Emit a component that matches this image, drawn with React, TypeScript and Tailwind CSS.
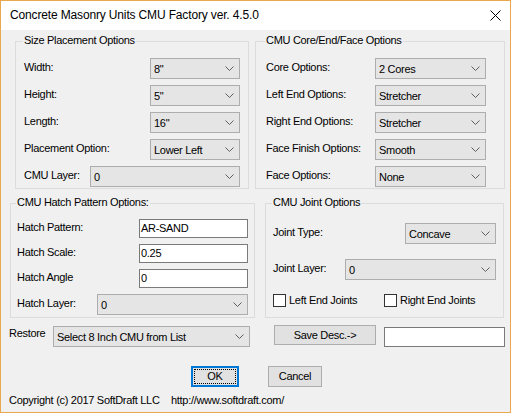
import React from 'react'

function Chevron() {
  return (
    <svg width="9" height="5" viewBox="0 0 9 5" className="shrink-0">
      <path d="M0.5 0.5 L4.5 4.5 L8.5 0.5" fill="none" stroke="#5f5f5f" strokeWidth="1" />
    </svg>
  )
}

function Combo({ value, className }: { value: string; className: string }) {
  return (
    <div
      className={`${className} h-[21px] flex items-center justify-between bg-[#e5e5e5] border border-[#adadad] pl-[3px] pr-[5px]`}
    >
      <span className="pt-[1px]">{value}</span>
      <Chevron />
    </div>
  )
}

function TextBox({ value, className }: { value: string; className: string }) {
  return (
    <div className={`${className} flex items-center bg-white border border-[#7a7a7a] pl-[1px]`}>
      {value}
    </div>
  )
}

function Group({
  title,
  titleLeft,
  className,
  children,
}: {
  title: string
  titleLeft: string
  className: string
  children: React.ReactNode
}) {
  return (
    <div className={`relative border border-[#dcdcdc] ${className}`}>
      <span className={`absolute -top-[8px] ${titleLeft} px-[1px] bg-[#f0f0f0] leading-[13px]`}>
        {title}
      </span>
      {children}
    </div>
  )
}

function Row({ label, children }: { label: string; children: React.ReactNode }) {
  return (
    <div className="flex items-center justify-between">
      <span className="pb-[3px]">{label}</span>
      {children}
    </div>
  )
}

function CheckBox({ label, className }: { label: string; className?: string }) {
  return (
    <div className={`flex items-center ${className ?? ''}`}>
      <div className="w-[13px] h-[13px] bg-white border border-[#333333]" />
      <span className="ml-[3px]">{label}</span>
    </div>
  )
}

export default function App() {
  return (
    <div className="w-[511px] h-[413px] flex flex-col border border-[#e9a84e] bg-[#f0f0f0] text-black text-[11px] leading-[13px] tracking-[-0.3px] font-['Liberation_Sans',Arial,sans-serif] select-none">
      {/* Title bar */}
      <div className="h-[29px] shrink-0 bg-white flex items-center justify-between pl-[9px] pr-[9px] text-[12px] tracking-[-0.15px]">
        <span>Concrete Masonry Units CMU Factory ver. 4.5.0</span>
        <svg width="11" height="11" viewBox="0 0 11 11">
          <path d="M0.5 0.5 L10.5 10.5 M10.5 0.5 L0.5 10.5" stroke="#000" strokeWidth="1" />
        </svg>
      </div>

      {/* Top groups */}
      <div className="flex mt-[11px] pl-[14px]">
        <Group
          title="Size Placement Options"
          titleLeft="left-[7px]"
          className="w-[234px] h-[148px] pt-[16px] px-[8px] flex flex-col gap-[6px]"
        >
          <Row label="Width:">
            <Combo value={'8"'} className="w-[90px]" />
          </Row>
          <Row label="Height:">
            <Combo value={'5"'} className="w-[90px]" />
          </Row>
          <Row label="Length:">
            <Combo value={'16"'} className="w-[90px]" />
          </Row>
          <Row label="Placement Option:">
            <Combo value="Lower Left" className="w-[90px]" />
          </Row>
          <Row label="CMU Layer:">
            <Combo value="0" className="w-[150px]" />
          </Row>
        </Group>

        <Group
          title="CMU Core/End/Face Options"
          titleLeft="left-[9px]"
          className="ml-[6px] w-[250px] h-[148px] pt-[16px] pl-[10px] pr-[18px] flex flex-col gap-[6px]"
        >
          <Row label="Core Options:">
            <Combo value="2 Cores" className="w-[111px]" />
          </Row>
          <Row label="Left End Options:">
            <Combo value="Stretcher" className="w-[111px]" />
          </Row>
          <Row label="Right End Options:">
            <Combo value="Stretcher" className="w-[111px]" />
          </Row>
          <Row label="Face Finish Options:">
            <Combo value="Smooth" className="w-[111px]" />
          </Row>
          <Row label="Face Options:">
            <Combo value="None" className="w-[111px]" />
          </Row>
        </Group>
      </div>

      {/* Middle groups */}
      <div className="flex mt-[14px] pl-[9px]">
        <Group
          title="CMU Hatch Pattern Options:"
          titleLeft="left-[5px]"
          className="w-[245px] h-[115px] pt-[15px] px-[6px] flex flex-col gap-[6px]"
        >
          <Row label="Hatch Pattern:">
            <TextBox value="AR-SAND" className="w-[109px] h-[19px]" />
          </Row>
          <Row label="Hatch Scale:">
            <TextBox value="0.25" className="w-[109px] h-[19px]" />
          </Row>
          <Row label="Hatch Angle">
            <TextBox value="0" className="w-[109px] h-[19px]" />
          </Row>
          <Row label="Hatch Layer:">
            <Combo value="0" className="w-[151px]" />
          </Row>
        </Group>

        <Group
          title="CMU Joint Options"
          titleLeft="left-[6px]"
          className="ml-[10px] w-[239px] h-[115px] pt-[19px] px-[7px] flex flex-col"
        >
          <Row label="Joint Type:">
            <Combo value="Concave" className="w-[91px]" />
          </Row>
          <div className="mt-[15px]">
            <Row label="Joint Layer:">
              <Combo value="0" className="w-[151px]" />
            </Row>
          </div>
          <div className="flex mt-[14px]">
            <CheckBox label="Left End Joints" className="w-[111px]" />
            <CheckBox label="Right End Joints" />
          </div>
        </Group>
      </div>

      {/* Restore row */}
      <div className="flex items-start mt-[7px] pl-[8px]">
        <span className="w-[44px] mt-[2px]">Restore</span>
        <Combo value="Select 8 Inch CMU from List" className="w-[197px] mt-[1px]" />
        <button className="ml-[24px] w-[102px] h-[20px] bg-[#e1e1e1] border border-[#adadad] flex items-center justify-center">
          Save Desc.-&gt;
        </button>
        <div className="ml-[8px] mt-[2px] w-[121px] h-[20px] bg-white border border-[#7a7a7a]" />
      </div>

      {/* OK / Cancel */}
      <div className="flex mt-[19px] pl-[190px]">
        <button className="w-[48px] h-[21px] bg-[#e1e1e1] border-2 border-[#0078d7] p-[1px] flex">
          <span className="flex-1 flex items-center justify-center border border-dotted border-black">
            OK
          </span>
        </button>
        <button className="ml-[29px] w-[54px] h-[21px] bg-[#e1e1e1] border border-[#adadad] flex items-center justify-center">
          Cancel
        </button>
      </div>

      {/* Footer */}
      <div className="flex mt-[7px] pl-[8px]">
        <span className="w-[162px]">Copyright (c) 2017 SoftDraft LLC</span>
        <span>http://www.softdraft.com/</span>
      </div>
    </div>
  )
}
